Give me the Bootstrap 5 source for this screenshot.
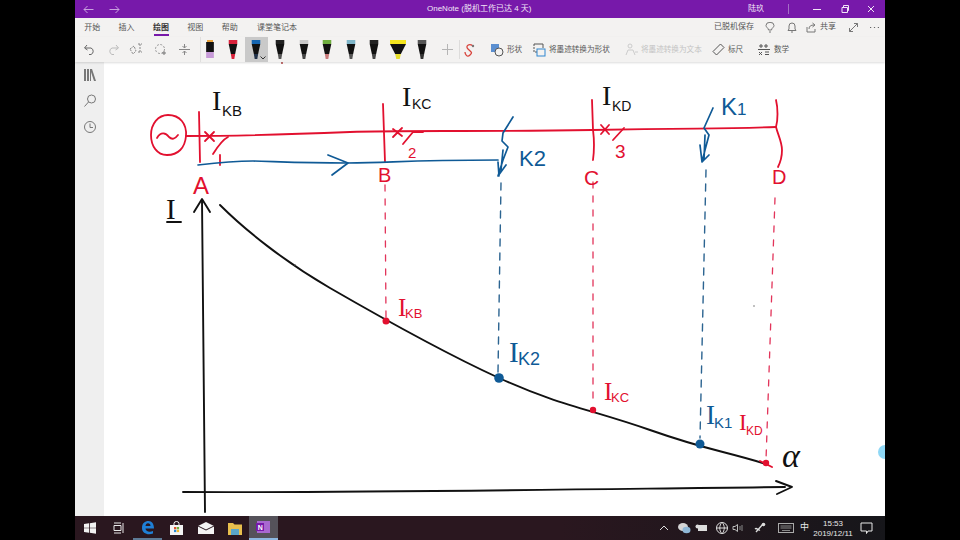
<!DOCTYPE html>
<html lang="zh-CN">
<head>
<meta charset="UTF-8" />
<title>OneNote</title>
<link rel="stylesheet" href="https://cdn.jsdelivr.net/npm/bootstrap@5.3.0/dist/css/bootstrap.min.css" />
<style>
  html, body { height: 540px; overflow: hidden; background: #000; }
  body { font-family: "Liberation Sans", "Noto Sans CJK SC", sans-serif; font-size: 8px; line-height: 1; color: #444; }
  .app-frame { width: 810px; height: 540px; margin-left: 75px; }
  .title-bar { height: 18px; background: #7719aa; color: #f1e6f6; font-size: 8px; padding: 0 0 0 8px; position: relative; }
  .title-text { position: absolute; left: 352px; top: 5px; white-space: nowrap; }
  .title-arrows { gap: 15px; }
  .user-name { position: absolute; left: 673px; top: 5px; }
  .title-sep { position: absolute; left: 713px; top: 4px; width: 1px; height: 10px; background: #a56fc6; }
  .win-btn { position: absolute; top: 4px; }
  .win-min { left: 737px; }
  .win-max { left: 765px; }
  .win-close { left: 791px; }
  .tab-row { height: 19px; background: #f3f2f1; color: #555; position: relative; }
  .tab-item { height: 19px; padding-top: 6px; width: 34.4px; text-align: center; position: relative; white-space: nowrap; }
  .tab-wide { width: 60px; }
  .tab-on { color: #333; font-weight: 700; }
  .tab-on::after { content: ""; position: absolute; left: 10px; right: 9px; bottom: 1px; height: 2px; background: #7719aa; }
  .tab-tool { position: absolute; top: 5px; white-space: nowrap; }
  .tt-save { left: 639px; }
  .tt-bulb { left: 690px; top: 4px; }
  .tt-bell { left: 712px; top: 4px; }
  .tt-share { left: 731px; top: 4px; }
  .tt-sharetext { left: 745px; }
  .tt-expand { left: 773px; top: 4px; }
  .tt-more { left: 794px; top: 4px; }
  .tool-bar { height: 25px; background: #f3f2f1; padding-left: 3px; box-shadow: 0 1px 2px rgba(0, 0, 0, .14); position: relative; z-index: 2; color: #5a5a5a; }
  .tool-slot { width: 23.6px; height: 25px; flex: none; }
  .plus-slot { margin-left: 2px; }
  .pen-group { margin-left: 4px; border-left: 1px solid #e0dfde; }
  .pen-slot { width: 23.6px; height: 25px; flex: none; }
  .pen-slot:first-child { width: 18px; margin-right: 2px; }
  .pen-on { background: #c9c9c9; position: relative; }
  .pen-arrow { position: absolute; right: 2px; bottom: 2px; }
  .tool-sep { width: 1px; height: 19px; background: #dddcdb; flex: none; margin-right: -2px; }
  .tool-cmd { position: absolute; top: 0; height: 25px; white-space: nowrap; gap: 3px; font-size: 7.6px; }
  .cmd-off { color: #c4c4c4; }
  .cmd-shape { left: 415px; }
  .cmd-convert { left: 457px; }
  .cmd-text { left: 549px; }
  .cmd-ruler { left: 637px; }
  .cmd-math { left: 682px; }
  .work-area { height: 454px; background: #fff; }
  .side-bar { width: 29px; background: #efefef; padding-top: 5px; gap: 10px; flex: none; }
  .side-icon { height: 16px; }
  .ink-page { flex: 1; position: relative; overflow: hidden; }
  .ink-page svg { display: block; }
  .ink { fill: none; stroke-linecap: round; stroke-linejoin: round; }
  .ink-r { stroke: #e2102f; stroke-width: 1.8; }
  .ink-b { stroke: #0f5a96; stroke-width: 1.7; }
  .ink-k { stroke: #111; stroke-width: 1.9; }
  .dash-r { stroke: #e2345a; stroke-width: 1.3; stroke-dasharray: 6 8; }
  .dash-b { stroke: #2c6491; stroke-width: 1.4; stroke-dasharray: 7 7; }
  .hand { font-family: "Liberation Sans", sans-serif; }
  .hand-i { font-family: "Liberation Serif", serif; }
  .tr { fill: #e2102f; }
  .tb { fill: #0f5a96; }
  .tk { fill: #111; }
  .scroll-dot { position: absolute; right: -7px; top: 383px; width: 14px; height: 14px; border-radius: 50%; background: #8fd8f6; }
  .task-bar { height: 24px; background: linear-gradient(90deg, #2a171f 0, #2a171f 60%, #16161a 100%); color: #e8e8e8; position: relative; }
  .task-slot { width: 29px; height: 24px; flex: none; }
  .task-on { background: #55525a; border-bottom: 2px solid #8db7e0; }
  .task-line { border-bottom: 2px solid #5d7a95; }
  .tray-item { position: absolute; top: 5px; }
  .tray-text { font-size: 9px; }
  .tray-clock { position: absolute; left: 735px; top: 3px; width: 46px; text-align: center; font-size: 8px; line-height: 10px; color: #e8e8e8; }
  .tray-up { left: 584px; }
  .tray-wechat { left: 602px; }
  .tray-msg { left: 619px; }
  .tray-globe { left: 640px; }
  .tray-sound { left: 656px; }
  .tray-pen { left: 678px; }
  .tray-keys { left: 703px; }
  .tray-lang { left: 725px; top: 7px; }
  .tray-note { left: 785px; }
</style>
<script src="https://cdn.jsdelivr.net/npm/bootstrap@5.3.0/dist/js/bootstrap.bundle.min.js"></script>
</head>
<body>
<div class="app-frame d-flex flex-column">
  <div class="title-bar d-flex align-items-center">
    <div class="title-arrows d-flex">
      <svg width="11" height="9" viewBox="0 0 11 9"><path d="M10.500 4.500H1M4.500 1 1 4.500 4.500 8" fill="none" stroke="#c9a3df"/></svg>
      <svg width="11" height="9" viewBox="0 0 11 9"><path d="M.5 4.500H10M6.500 1 10 4.500 6.500 8" fill="none" stroke="#c9a3df"/></svg>
    </div>
    <span class="title-text">OneNote (脱机工作已达 4 天)</span>
    <span class="user-name">陆玖</span>
    <span class="title-sep"></span>
    <svg class="win-btn win-min" width="10" height="10" viewBox="0 0 10 10"><path d="M1 5.500H9" stroke="#f1e6f6"/></svg>
    <svg class="win-btn win-max" width="10" height="10" viewBox="0 0 10 10"><path d="M2 3.500H7.500V8.500H2ZM3.500 3V1.500H8.500V6.500H8" fill="none" stroke="#f1e6f6"/></svg>
    <svg class="win-btn win-close" width="10" height="10" viewBox="0 0 10 10"><path d="M2 2 8 8M8 2 2 8" stroke="#f1e6f6"/></svg>
  </div>

  <div class="tab-row d-flex">
    <div class="tab-item">开始</div>
    <div class="tab-item">插入</div>
    <div class="tab-item tab-on">绘图</div>
    <div class="tab-item">视图</div>
    <div class="tab-item">帮助</div>
    <div class="tab-item tab-wide">课堂笔记本</div>
    <span class="tab-tool tt-save">已脱机保存</span>
    <svg class="tab-tool tt-bulb" width="10" height="11" viewBox="0 0 10 11"><path d="M3.500 8C3.500 6 1 5.500 1 3.500A4 3.200 0 0 1 9 3.500C9 5.500 6.500 6 6.500 8ZM4 10H6" fill="none" stroke="#777"/></svg>
    <svg class="tab-tool tt-bell" width="10" height="11" viewBox="0 0 10 11"><path d="M1 8.500H9L8 7V4A3 3 0 0 0 2 4V7ZM4 10H6" fill="none" stroke="#777"/></svg>
    <svg class="tab-tool tt-share" width="11" height="11" viewBox="0 0 11 11"><path d="M1 5V10H9V7M3 7C3 4 5 3 8 3M6.500 1 9 3 6.500 5" fill="none" stroke="#777"/></svg>
    <span class="tab-tool tt-sharetext">共享</span>
    <svg class="tab-tool tt-expand" width="11" height="11" viewBox="0 0 11 11"><path d="M1.500 9.500 9.500 1.500M6 1.500H9.500V5M1.500 6V9.500H5" fill="none" stroke="#777"/></svg>
    <svg class="tab-tool tt-more" width="11" height="11" viewBox="0 0 11 11"><path d="M1 5.500H2.200M4.900 5.500H6.100M8.800 5.500H10" stroke="#666" stroke-width="1.200"/></svg>
  </div>

  <div class="tool-bar d-flex align-items-center">
    <div class="tool-slot d-flex align-items-center justify-content-center">
      <svg width="13" height="13" viewBox="0 0 13 13"><path d="M4 2 1.500 5 4.500 7M2 5H8A3.500 3.500 0 0 1 8 11.500H6" fill="none" stroke="#666"/></svg>
    </div>
    <div class="tool-slot d-flex align-items-center justify-content-center">
      <svg width="13" height="13" viewBox="0 0 13 13"><path d="M9 2 11.500 5 8.500 7M11 5H5A3.500 3.500 0 0 0 5 11.500H7" fill="none" stroke="#bbb"/></svg>
    </div>
    <div class="tool-slot d-flex align-items-center justify-content-center">
      <svg width="15" height="13" viewBox="0 0 15 13"><path d="M1 6 5 3 7 8 4 11ZM11 1V9M9 1H13M9 9H13" fill="none" stroke="#888" stroke-dasharray="2 1"/></svg>
    </div>
    <div class="tool-slot d-flex align-items-center justify-content-center">
      <svg width="13" height="13" viewBox="0 0 13 13"><circle cx="6" cy="6" r="4.500" fill="none" stroke="#999" stroke-dasharray="2 1.500"/><path d="M10 8V12M8 10H12" stroke="#777"/></svg>
    </div>
    <div class="tool-slot d-flex align-items-center justify-content-center">
      <svg width="13" height="13" viewBox="0 0 13 13"><path d="M1 6.500H12M6.500 1V5M4.500 3 6.500 5 8.500 3M6.500 12V8M4.500 10 6.500 8 8.500 10" fill="none" stroke="#888"/></svg>
    </div>
    <div class="pen-group d-flex" id="pens"></div>
    <div class="tool-slot plus-slot d-flex align-items-center justify-content-center">
      <svg width="11" height="11" viewBox="0 0 11 11"><path d="M5.500 0V11M0 5.500H11" stroke="#b5b5b5"/></svg>
    </div>
    <div class="tool-sep"></div>
    <div class="tool-slot d-flex align-items-center justify-content-center">
      <svg width="13" height="14" viewBox="0 0 13 14"><path d="M10 3C6 0 2 3 5 6S10 9 7 12 2 11 2 9" fill="none" stroke="#d8433b" stroke-width="1.300"/><circle cx="10" cy="3" r="1.200" fill="#777"/></svg>
    </div>
    <div class="tool-cmd cmd-shape d-flex align-items-center">
      <svg width="14" height="14" viewBox="0 0 14 14"><rect x="1" y="1" width="8" height="8" fill="#5b8fd0"/><circle cx="9" cy="9" r="4" fill="#f3f2f1" stroke="#555"/></svg><span>形状</span>
    </div>
    <div class="tool-cmd cmd-convert d-flex align-items-center">
      <svg width="14" height="14" viewBox="0 0 14 14"><path d="M2 1V9H5" fill="none" stroke="#555" stroke-dasharray="2 1"/><path d="M2 1H11V5" fill="none" stroke="#555"/><rect x="5" y="6" width="8" height="7" fill="none" stroke="#2f86d0"/></svg><span>将墨迹转换为形状</span>
    </div>
    <div class="tool-cmd cmd-text cmd-off d-flex align-items-center">
      <svg width="14" height="14" viewBox="0 0 14 14"><circle cx="6" cy="3" r="2" fill="none" stroke="#ccc"/><path d="M2 12 4 7H9L11 12M11 9H14" fill="none" stroke="#ccc"/></svg><span>将墨迹转换为文本</span>
    </div>
    <div class="tool-cmd cmd-ruler d-flex align-items-center">
      <svg width="13" height="13" viewBox="0 0 13 13"><path d="M1 8.500 8.500 1 12 4.500 4.500 12Z" fill="none" stroke="#555"/></svg><span>标尺</span>
    </div>
    <div class="tool-cmd cmd-math d-flex align-items-center">
      <svg width="14" height="13" viewBox="0 0 14 13"><path d="M1 6.500H13M4 1V5M2 3H6M9 1V5M7 3H11M2 9 5 12M5 9 2 12M8 9H12M8 11.500H12" fill="none" stroke="#555"/></svg><span>数学</span>
    </div>
  </div>

  <div class="work-area d-flex">
    <div class="side-bar d-flex flex-column align-items-center">
      <svg class="side-icon" width="14" height="16" viewBox="0 0 14 16"><path d="M1 2H3V14H1ZM4 2H6V14H4ZM7 2H9L13 14H11L8 5V14H7Z" fill="#777"/></svg>
      <svg class="side-icon" width="14" height="16" viewBox="0 0 14 16"><circle cx="8.500" cy="6" r="4" fill="none" stroke="#777"/><path d="M5.500 9 1.500 13.500" stroke="#777"/></svg>
      <svg class="side-icon" width="14" height="16" viewBox="0 0 14 16"><circle cx="7" cy="8" r="5.500" fill="none" stroke="#777"/><path d="M7 4.500V8.500H10" fill="none" stroke="#777"/></svg>
    </div>
    <div class="ink-page">
      <svg width="781" height="454" viewBox="104 62 781 454">
        <circle cx="282" cy="63" r=".9" fill="#a33"/>
        <!-- circuit -->
        <path class="ink ink-r" d="M168 115C180 115 187 124 186 136C185 148 178 155 167 155C157 155 151 146 151 135C151 124 158 115 168 115Z"/>
        <path class="ink ink-r" d="M157 138C161 131 166 133 169 137C172 140 175 139 178 135"/>
        <path class="ink ink-r" d="M186 136C220 136 300 134 350 132S470 132 592 130S720 129 776 127"/>
        <path class="ink ink-r" d="M199 112L200 162"/>
        <path class="ink ink-r" d="M205 132L214 141M214 132L205 141"/>
        <path class="ink ink-r" d="M213 154C218 146 222 140 228 137"/>
        <path class="ink ink-r" d="M220 155L220 165"/>
        <path class="ink ink-r" d="M383 104L384 133L385 162"/>
        <path class="ink ink-r" d="M393 129L402 136M402 128L393 137"/>
        <path class="ink ink-r" d="M403 144L413 132L423 132"/>
        <path class="ink ink-r" d="M592 100L593 130C594 138 595 145 593 160"/>
        <path class="ink ink-r" d="M601 125L609 134M609 125L601 134"/>
        <path class="ink ink-r" d="M613 140L624 128"/>
        <path class="ink ink-r" d="M776 100C778 108 778 120 776 127C778 135 782 142 782 150C782 158 780 163 778 167"/>
        <path class="ink ink-b" d="M198 165C215 163 240 161 253 161S300 163 347 163S400 160 498 160"/>
        <path class="ink ink-b" d="M328 155L348 163L332 175"/>
        <path class="ink ink-b" d="M513 117L503 133L502 141L508 147L503 160L498 176L506 165M498 162L499 176M503 150L501 170"/>
        <path class="ink ink-b" d="M713 108L704 128L709 135L705 150L702 162M700 145L702 162L709 155M705 135L704 160"/>
        <!-- drop lines -->
        <path class="ink dash-r" d="M385 185L386 318"/>
        <path class="ink dash-b" d="M501 183L498 372"/>
        <path class="ink dash-r" d="M593 182L593 405"/>
        <path class="ink dash-b" d="M706 170L700 438"/>
        <path class="ink dash-r" d="M775 198L766 460"/>
        <!-- axes -->
        <path class="ink ink-k" d="M202 200L205 512"/>
        <path class="ink ink-k" d="M194 212L202 199L210 212"/>
        <path class="ink ink-k" d="M183 492C350 493 600 489 785 487"/>
        <path class="ink ink-k" d="M776 481L792 487L777 494"/>
        <path class="ink ink-k" d="M167 222L181 222"/>
        <path class="ink ink-k" d="M220 205C245 230 285 262 330 288S440 351 499 378S593 410 650 430S720 450 766 464"/>
        <path class="ink ink-r" d="M760 461L772 467"/>
        <circle cx="386" cy="321" r="3.500" fill="#e2102f"/>
        <circle cx="499" cy="378" r="4.800" fill="#0f5a96"/>
        <circle cx="593" cy="410" r="3.200" fill="#e2102f"/>
        <circle cx="700" cy="444" r="4.500" fill="#0f5a96"/>
        <circle cx="766" cy="463" r="3.200" fill="#e2102f"/>
        <circle cx="754" cy="306" r=".7" fill="#555"/>
        <circle cx="295" cy="265" r=".8" fill="#555"/>
        <!-- labels -->
        <text class="hand-i tk" x="212" y="110" font-size="28">I</text><text class="hand tk" x="222" y="116" font-size="15">KB</text>
        <text class="hand-i tk" x="402" y="106" font-size="28">I</text><text class="hand tk" x="412" y="109" font-size="14">KC</text>
        <text class="hand-i tk" x="602" y="105" font-size="28">I</text><text class="hand tk" x="612" y="111" font-size="14">KD</text>
        <text class="hand-i tk" x="166" y="219" font-size="29">I</text>
        <text class="hand tr" x="193" y="194" font-size="24">A</text>
        <text class="hand tr" x="378" y="182" font-size="20">B</text>
        <text class="hand tr" x="584" y="185" font-size="21">C</text>
        <text class="hand tr" x="772" y="184" font-size="20">D</text>
        <text class="hand tr" x="408" y="158" font-size="15">2</text>
        <text class="hand tr" x="615" y="158" font-size="19">3</text>
        <text class="hand tb" x="519" y="166" font-size="22">K2</text>
        <text class="hand tb" x="721" y="115" font-size="24">K<tspan font-size="17">1</tspan></text>
        <text class="hand-i tr" x="398" y="316" font-size="25">I</text><text class="hand tr" x="405" y="318" font-size="13">KB</text>
        <text class="hand-i tb" x="509" y="362" font-size="29">I</text><text class="hand tb" x="518" y="365" font-size="18">K2</text>
        <text class="hand-i tr" x="604" y="400" font-size="25">I</text><text class="hand tr" x="611" y="402" font-size="13">KC</text>
        <text class="hand-i tb" x="706" y="424" font-size="27">I</text><text class="hand tb" x="714" y="428" font-size="15">K1</text>
        <text class="hand-i tr" x="739" y="430" font-size="23">I</text><text class="hand tr" x="746" y="435" font-size="12">KD</text>
        <text class="hand-i tk" x="782" y="467" font-size="34" font-style="italic">α</text>
      </svg>
      <div class="scroll-dot"></div>
    </div>
  </div>

  <div class="task-bar d-flex align-items-center">
    <div class="task-slot d-flex align-items-center justify-content-center">
      <svg width="12" height="12" viewBox="0 0 12 12"><path d="M0 2 5 1.300V5.700H0ZM5.800 1.200 12 .2V5.700H5.800ZM0 6.300H5V10.700L0 10ZM5.800 6.300H12V11.800L5.800 10.800Z" fill="#f2f2f2"/></svg>
    </div>
    <div class="task-slot d-flex align-items-center justify-content-center">
      <svg width="12" height="12" viewBox="0 0 12 12"><path d="M1 3.500H8V8.500H1ZM1 1H8M1 11H8M10 1V11" fill="none" stroke="#e8e8e8"/></svg>
    </div>
    <div class="task-slot task-line d-flex align-items-center justify-content-center">
      <svg width="14" height="15" viewBox="0 0 14 15"><path d="M1 8C1 3 4 1 7.500 1C11 1 13 4 13 8.500H4.500C4.500 11 8 13 12 11V13.500C7 15.500 1 13.500 1 8ZM4.500 6H9.500C9.500 4 8.500 3.200 7 3.200C5.500 3.200 4.700 4.500 4.500 6Z" fill="#1f7fd6"/></svg>
    </div>
    <div class="task-slot d-flex align-items-center justify-content-center">
      <svg width="15" height="15" viewBox="0 0 15 15"><path d="M1 4H14V14H1Z" fill="#f4f4f4"/><path d="M5 4V2.500A2.500 2 0 0 1 10 2.500V4" fill="none" stroke="#f4f4f4"/><rect x="5" y="6" width="2.300" height="2.300" fill="#e2522b"/><rect x="7.800" y="6" width="2.300" height="2.300" fill="#6eb23f"/><rect x="5" y="8.800" width="2.300" height="2.300" fill="#2a8ad6"/><rect x="7.800" y="8.800" width="2.300" height="2.300" fill="#f2b92b"/></svg>
    </div>
    <div class="task-slot d-flex align-items-center justify-content-center">
      <svg width="16" height="12" viewBox="0 0 16 12"><path d="M0 4 8 0 16 4V12H0Z" fill="#f4f4f4"/><path d="M0 4 8 8 16 4" fill="none" stroke="#2a171f"/></svg>
    </div>
    <div class="task-slot d-flex align-items-center justify-content-center">
      <svg width="14" height="13" viewBox="0 0 14 13"><path d="M0 1H5L6.500 2.500H14V13H0Z" fill="#e8bf4d"/><path d="M3 7H11V13H3Z" fill="#5aa6c9"/></svg>
    </div>
    <div class="task-slot task-on d-flex align-items-center justify-content-center">
      <svg width="15" height="14" viewBox="0 0 15 14"><rect x="1" y="1" width="13" height="12" fill="#a868d0"/><rect x="0" y="3" width="8" height="8" fill="#7719aa"/><text x="1.700" y="9.800" font-size="7" font-weight="700" fill="#fff">N</text></svg>
    </div>
    <svg class="tray-item tray-up" width="10" height="14" viewBox="0 0 10 14"><path d="M1 9 5 5 9 9" fill="none" stroke="#ddd"/></svg>
    <svg class="tray-item tray-wechat" width="14" height="14" viewBox="0 0 14 14"><ellipse cx="6" cy="6" rx="5" ry="4" fill="#d5d5d5"/><ellipse cx="9.500" cy="9" rx="4" ry="3.200" fill="#8fb7d6"/></svg>
    <svg class="tray-item tray-msg" width="14" height="14" viewBox="0 0 14 14"><rect x="4" y="4" width="9" height="6" fill="#ddd"/><circle cx="3.500" cy="5.500" r="2" fill="#ddd"/></svg>
    <svg class="tray-item tray-globe" width="14" height="14" viewBox="0 0 14 14"><circle cx="7" cy="7" r="5.500" fill="none" stroke="#ddd"/><path d="M1.500 7H12.500M7 1.500C4 4 4 10 7 12.500C10 10 10 4 7 1.500Z" fill="none" stroke="#ddd"/></svg>
    <svg class="tray-item tray-sound" width="14" height="14" viewBox="0 0 14 14"><path d="M2 5.500H4L6.500 3.500V10.500L4 8.500H2Z" fill="none" stroke="#bbb"/><path d="M9 5V9M11 4V10" stroke="#888"/></svg>
    <svg class="tray-item tray-pen" width="14" height="14" viewBox="0 0 14 14"><path d="M3 11 10 3M2 8C4 6 5 10 7 9" fill="none" stroke="#ddd" stroke-width="1.300"/><circle cx="10.500" cy="3.500" r="1.800" fill="#ddd"/></svg>
    <svg class="tray-item tray-keys" width="16" height="14" viewBox="0 0 16 14"><rect x=".5" y="2.500" width="15" height="9" fill="none" stroke="#aaa"/><path d="M2.500 5H13.500M2.500 7H13.500M4 9.500H12" stroke="#888"/></svg>
    <span class="tray-item tray-text tray-lang">中</span>
    <div class="tray-clock">15:53<br />2019/12/11</div>
    <svg class="tray-item tray-note" width="13" height="14" viewBox="0 0 13 14"><path d="M1 2H12V10H8L6.500 12.500V10H1Z" fill="none" stroke="#e8e8e8"/></svg>
  </div>
</div>

<script>
  // pen presets: cap, tip
  const pens = [
    { cap: '#e9a23b', tip: '#c79bd8', block: true },
    { cap: '#d8213a', tip: '#d8213a' },
    { cap: '#1565b0', tip: '#22324a', on: true },
    { cap: '#222', tip: '#555' },
    { cap: '#c8c8c8', tip: '#444' },
    { cap: '#6fae3f', tip: '#c97a7a' },
    { cap: '#7fb6c9', tip: '#555' },
    { cap: '#222', tip: '#444' },
    { cap: '#f4e51e', tip: '#e8df2c', wide: true },
    { cap: '#555', tip: '#333' }
  ]

  const penHtml = pens.map((p) => {
    let art
    if (p.block) {
      art = `<rect x="3.500" y="0" width="7" height="2" fill="${p.cap}"/>
             <rect x="2.500" y="2" width="9" height="10" fill="#111"/>
             <rect x="2.500" y="12" width="9" height="6" fill="${p.tip}"/>`
    } else {
      const w = p.wide ? 0 : 2
      art = `<rect x="${w}" y="0" width="${14 - w * 2}" height="4" fill="${p.cap}"/>
             <path d="M${w} 4H${14 - w}L9.500 14H4.500Z" fill="#111"/>
             <path d="M4.500 14H9.500L8.500 19H5.500Z" fill="${p.tip}"/>`
    }
    const arrow = p.on
      ? '<svg width="6" height="4" viewBox="0 0 6 4" class="pen-arrow"><path d="M.5 .5 3 3 5.500 .5" fill="none" stroke="#333"/></svg>'
      : ''
    const w = p.wide ? 16 : 12
    return `<div class="pen-slot d-flex align-items-center justify-content-center ${p.on ? 'pen-on' : ''}">
      <svg width="${w}" height="19" viewBox="0 0 14 19" preserveAspectRatio="none">${art}</svg>${arrow}</div>`
  })
  document.getElementById('pens').innerHTML = penHtml.join('')
</script>
</body>
</html>
